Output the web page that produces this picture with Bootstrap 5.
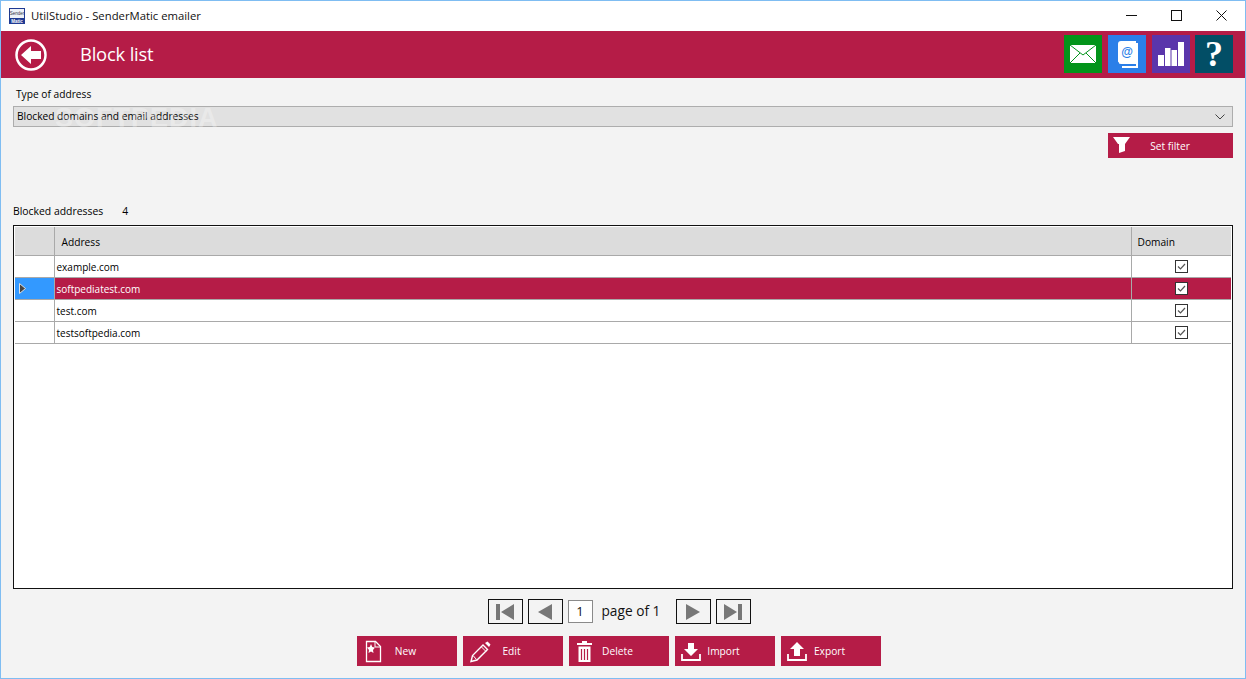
<!DOCTYPE html>
<html lang="en">
<head>
<meta charset="UTF-8">
<title>UtilStudio - SenderMatic emailer</title>
<link href="https://cdn.jsdelivr.net/npm/bootstrap@5.3.3/dist/css/bootstrap.min.css" rel="stylesheet">
<style>
html, body { height: 100%; overflow: hidden; }
body { background: #f3f3f3; font-family: "Open Sans", "Liberation Sans", sans-serif; font-size: 10.2px; color: #000; }
.app-win { width: 1246px; height: 679px; border: 1px solid #7fbdf2; position: relative; }
.title-bar { height: 30px; background: #fff; font-size: 11.3px; padding-left: 8px; color: #111; }
.title-left { gap: 6px; }
.win-btns { margin-right: 1px; margin-top: -2px; }
.win-btns svg { display: block; }
.win-btn { width: 45px; height: 30px; display: flex; align-items: center; justify-content: center; }
.head-bar { height: 47px; background: #b51c47; color: #fff; padding: 0 12px 0 13px; }
.head-title { font-size: 18.4px; margin-left: 32px; margin-top: -2px; letter-spacing: -.2px; }
.tile-row { gap: 6px; margin-top: -1px; }
.tile { width: 38px; height: 38px; display: flex; align-items: center; justify-content: center; }
.tile-green { background: #02941a; }
.tile-blue { background: #2b7fe8; }
.tile-purple { background: #5a35ab; }
.tile-teal { background: #024e66; color: #fff; font: bold 36px/38px "Liberation Serif", serif; margin-left: -1px; }
.body-pad { padding: 0 12px; }
.type-label { margin: 9px 0 5px 3px; line-height: 14px; }
.fake-select { height: 21px; background: #e1e1e1; border: 1px solid #adadad; padding: 1px 7px 0 3px; color: #000; }
.soft-mark { position: absolute; left: 54px; top: 100px; font: bold 27px/34px "Liberation Sans", sans-serif; letter-spacing: 1px; color: rgba(255,255,255,.3); pointer-events: none; }
.filter-wrap { margin-top: 6px; height: 25px; }
.red-btn { background: #b51c47; color: #fff; border: 0; border-radius: 0; height: 30px; width: 100px; padding: 0 2px 0 0; position: relative; font-size: 10.2px; line-height: 30px; text-align: center; display: block; }
.red-btn:hover { background: #b51c47; color: #fff; }
.red-btn svg { position: absolute; left: 6px; top: 3px; }
.filter-btn { width: 125px; height: 25px; line-height: 26px; padding-left: 1px; }
.filter-btn svg { left: 5px; top: 4px; }
.count-line { margin: 46px 0 7px 0; line-height: 14px; gap: 19px; font-size: 10.4px; }
.grid-box { height: 364px; border: 1px solid #111; padding: 1px; background: #fff; }
.grid-tbl { width: 100%; table-layout: fixed; border-collapse: collapse; font-size: 10px; }
.grid-tbl th { background: #dcdcdc; font-weight: 400; height: 28px; border-right: 1px solid #a9a9a9; border-bottom: 1px solid #a9a9a9; padding: 4px 0 0 7px; font-size: 10.2px; }
.grid-tbl td { height: 22px; padding: 2px 0 0 2px; border-right: 1px solid #a9a9a9; border-bottom: 1px solid #a9a9a9; }
.grid-tbl .hdr-col { width: 39px; padding: 0; }
.grid-tbl .dom-col { width: 100px; text-align: center; padding: 0; border-right: 0; }
.grid-tbl th.dom-col { text-align: left; padding: 4px 0 0 6px; }
.grid-tbl tr.sel-row td { background: #b51c47; color: #fff; }
.grid-tbl tr.sel-row td.hdr-col { background: #3399ff; }
.chk { display: inline-block; vertical-align: middle; }
.chk svg { display: block; }
.pager { margin-top: 10px; margin-left: -8px; height: 25px; font-size: 13.7px; color: #111; }
.pg-btn { width: 35px; height: 25px; border: 1px solid #111; background: #f3f3f3; display: flex; align-items: center; justify-content: center; }
.pg-num { width: 25px; height: 23px; border: 1px solid #8a8a8a; background: #fff; text-align: center; line-height: 21px; font-size: 13px; margin: 0 9px 0 5px; }
.pg-text { width: 59px; white-space: nowrap; margin-right: 15px; }
.pg-gap { margin-right: 5px; }
.action-row { margin-top: 12px; gap: 6px; margin-left: -9px; }
</style>
</head>
<body>
<div class="app-win d-flex flex-column">

  <!-- title bar -->
  <div class="title-bar d-flex align-items-center justify-content-between">
    <div class="title-left d-flex align-items-center">
      <svg width="16" height="16" viewBox="0 0 16 16"><rect width="16" height="16" fill="#1f3a93"/><rect x="1" y="1" width="14" height="9" fill="#eef1f8"/><text x="8" y="7" text-anchor="middle" font-size="4.500" fill="#334" font-family="Liberation Sans, sans-serif">Sender</text><text x="8" y="14.500" text-anchor="middle" font-size="4.500" font-weight="700" fill="#fff" font-family="Liberation Sans, sans-serif">Matic</text></svg>
      <span>UtilStudio - SenderMatic emailer</span>
    </div>
    <div class="win-btns d-flex">
      <div class="win-btn"><svg width="11" height="11" viewBox="0 0 11 11"><path d="M0 5.500h11" stroke="#111"/></svg></div>
      <div class="win-btn"><svg width="11" height="11" viewBox="0 0 11 11"><rect x=".5" y=".5" width="10" height="10" fill="none" stroke="#111"/></svg></div>
      <div class="win-btn"><svg width="11" height="11" viewBox="0 0 11 11"><path d="M.5.500l10 10M10.500.500l-10 10" stroke="#111" fill="none"/></svg></div>
    </div>
  </div>

  <!-- red header -->
  <div class="head-bar d-flex align-items-center justify-content-between">
    <div class="d-flex align-items-center">
      <svg width="34" height="34" viewBox="0 0 34 34"><circle cx="17" cy="17" r="14.500" fill="none" stroke="#fff" stroke-width="2.500"/><path d="M7 17l10-9v5h10v8H17v5z" fill="#fff"/></svg>
      <div class="head-title">Block list</div>
    </div>
    <div class="tile-row d-flex">
      <div class="tile tile-green"><svg width="26" height="18" viewBox="0 0 26 18"><rect width="26" height="18" fill="#fff"/><path d="M0 0l13 10L26 0M0 18l10-10M26 18L16 8" fill="none" stroke="#02941a"/></svg></div>
      <div class="tile tile-blue"><svg width="22" height="28" viewBox="0 0 22 28"><path d="M5 1h15v23H5a3 3 0 0 1-3-3V4a3 3 0 0 1 3-3z" fill="#fff"/><path d="M20 3h2v25H6v-2h14z" fill="#fff"/><path d="M2 22a3 3 0 0 0 3 3h13" fill="none" stroke="#2b7fe8"/><text x="11" y="16" text-anchor="middle" font-size="12" font-weight="700" fill="#2b7fe8" font-family="Liberation Sans, sans-serif">@</text></svg></div>
      <div class="tile tile-purple"><svg width="26" height="24" viewBox="0 0 26 24"><path d="M0 13h6v11H0zM7 6h5.500v18H7zM13.500 8H19v16h-5.500zM20 0h6v24h-6z" fill="#fff"/></svg></div>
      <div class="tile tile-teal">?</div>
    </div>
  </div>

  <div class="soft-mark">SOFTPEDIA</div>

  <div class="body-pad flex-grow-1 d-flex flex-column">
    <div class="type-label">Type of address</div>
    <div class="fake-select d-flex align-items-center justify-content-between">
      <span>Blocked domains and email addresses</span>
      <svg width="10" height="6" viewBox="0 0 10 6"><path d="M.5.500L5 5 9.500.500" fill="none" stroke="#444"/></svg>
    </div>
    <div class="filter-wrap d-flex justify-content-end">
      <button type="button" class="btn red-btn filter-btn">
        <svg width="18" height="17" viewBox="0 0 18 17"><path d="M0 0h17l-5 7H5zM6 7h6v7l-6 2z" fill="#fff"/></svg>
        Set filter
      </button>
    </div>
    <div class="count-line d-flex"><span>Blocked addresses</span><span>4</span></div>

    <!-- list -->
    <div class="grid-box">
      <table class="grid-tbl">
        <thead>
          <tr><th class="hdr-col"></th><th>Address</th><th class="dom-col">Domain</th></tr>
        </thead>
        <tbody id="rowsBody"></tbody>
      </table>
    </div>

    <!-- pager -->
    <div class="pager d-flex align-items-center justify-content-center">
      <div class="pg-btn pg-gap"><svg width="18" height="16" viewBox="0 0 18 16"><path d="M0 0h4v16H0zM18 0v16L5 8z" fill="#777"/></svg></div>
      <div class="pg-btn"><svg width="14" height="16" viewBox="0 0 14 16"><path d="M14 0v16L0 8z" fill="#777"/></svg></div>
      <div class="pg-num">1</div>
      <div class="pg-text">page of 1</div>
      <div class="pg-btn pg-gap"><svg width="14" height="16" viewBox="0 0 14 16"><path d="M0 0v16l14-8z" fill="#777"/></svg></div>
      <div class="pg-btn"><svg width="18" height="16" viewBox="0 0 18 16"><path d="M18 0h-4v16h4zM0 0v16l13-8z" fill="#777"/></svg></div>
    </div>

    <!-- actions -->
    <div class="action-row d-flex justify-content-center">
      <button type="button" class="btn red-btn"><svg width="24" height="24" viewBox="0 0 24 24"><path d="M3.500 2.500h9l5 5v15h-14z" fill="none" stroke="#fff" stroke-width="1.300"/><path d="M12 3v5h5" fill="none" stroke="#fff"/><path d="M8 5l1.300 3L12 8.500 10 11l.5 3L8 12.500 5.500 14l.5-3-2-2.500L6.700 8z" fill="#fff"/></svg>New</button>
      <button type="button" class="btn red-btn"><svg width="24" height="24" viewBox="0 0 24 24"><path d="M2 22.500l1.500-6L14 6l4.500 4.500L8 21z" fill="none" stroke="#fff" stroke-width="1.400"/><path d="M4 16.500l3.500 4M12.500 8l4.500 4.500" stroke="#fff"/><path d="M16 4l2.500-1.500 3 3L20 8z" fill="#fff"/></svg>Edit</button>
      <button type="button" class="btn red-btn"><svg width="24" height="24" viewBox="0 0 24 24"><path d="M2 4h15v2H2zM7 4V2h5v2z" fill="#fff"/><path d="M3.500 7.500h12V23h-12z" fill="#fff"/><path d="M6.500 10v11M9.500 10v11M12.500 10v11" stroke="#b51c47" stroke-width="1.200"/></svg>Delete</button>
      <button type="button" class="btn red-btn"><svg width="24" height="24" viewBox="0 0 24 24"><path d="M1 15v6h18v-6" fill="none" stroke="#fff" stroke-width="1.800"/><path d="M7 4h6v6h4l-7 7-7-7h4z" fill="#fff"/></svg>Import</button>
      <button type="button" class="btn red-btn"><svg width="24" height="24" viewBox="0 0 24 24"><path d="M1 15v6h18v-6" fill="none" stroke="#fff" stroke-width="1.800"/><path d="M10 3l7 7h-4v7H7v-7H3z" fill="#fff"/></svg>Export</button>
    </div>
  </div>
</div>

<script>
const filas = ["example.com", "softpediatest.com", "test.com", "testsoftpedia.com"];
const chk = '<span class="chk"><svg width="13" height="13" viewBox="0 0 13 13"><rect x=".5" y=".5" width="12" height="12" fill="#fff" stroke="#333"/><path d="M3 6.500l2.500 2.500L10 4" fill="none" stroke="#555" stroke-width="1.200"/></svg></span>';
const arrow = '<svg class="d-block ms-1" width="7" height="11" viewBox="0 0 7 11"><path d="M.5.500v10l6-5z" fill="#444" stroke="#ddd"/></svg>';
const tbody = document.getElementById("rowsBody");
filas.forEach((f, i) => {
  tbody.innerHTML += `<tr class="${i === 1 ? "sel-row" : ""}"><td class="hdr-col">${i === 1 ? arrow : ""}</td><td>${f}</td><td class="dom-col">${chk}</td></tr>`;
});
</script>
<script src="https://cdn.jsdelivr.net/npm/bootstrap@5.3.3/dist/js/bootstrap.bundle.min.js"></script>
</body>
</html>
